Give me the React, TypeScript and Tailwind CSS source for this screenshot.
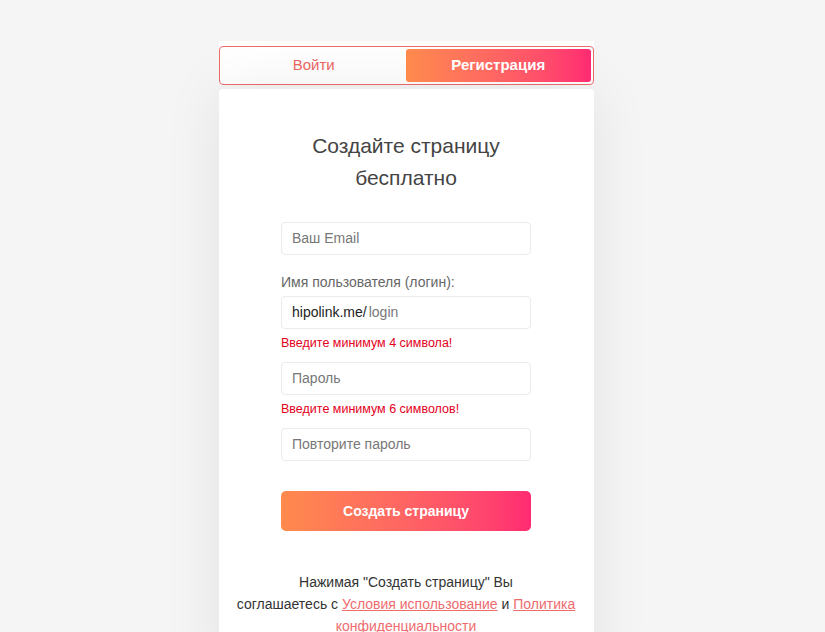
import { useState } from "react";

const font = { fontFamily: '"Liberation Sans", Arial, sans-serif' };

function Field({ placeholder, prefix }: { placeholder: string; prefix?: string }) {
  return (
    <div className="flex h-[33px] w-[250px] items-center rounded-[4px] border border-[#ebebeb] bg-white px-[10px] text-[14px]">
      {prefix && <span className="mr-[2px] text-[#222]">{prefix}</span>}
      <input
        className="w-full bg-transparent text-[#333] placeholder-[#777] outline-none"
        placeholder={placeholder}
      />
    </div>
  );
}

export default function App() {
  const [tab, setTab] = useState<"login" | "signup">("signup");

  return (
    <main className="flex min-h-[632px] justify-center bg-[#f5f5f5] pt-[41px] pr-[13px]" style={font}>
      <div className="w-[375px]">
        <div className="bg-white pt-[5px]">
          <div className="flex h-[39px] rounded-[4px] border border-[#ee6b6e] p-[2px]">
            <button
              onClick={() => setTab("login")}
              className={
                tab === "login"
                  ? "flex-1 rounded-[3px] bg-gradient-to-r from-[#ff8a4c] to-[#ff2a72] text-[15px] font-bold text-white"
                  : "flex-1 text-[15px] text-[#e8655f]"
              }
            >
              Войти
            </button>
            <button
              onClick={() => setTab("signup")}
              className={
                tab === "signup"
                  ? "flex-1 rounded-[3px] bg-gradient-to-r from-[#ff8a4c] to-[#ff2a72] text-[15px] font-bold text-white"
                  : "flex-1 text-[15px] text-[#e8655f]"
              }
            >
              Регистрация
            </button>
          </div>
        </div>

        <section className="mt-[4px] rounded-t-[4px] bg-white pb-10 shadow-[0_0_60px_rgba(0,0,0,0.08)]">
          <h1 className="px-10 pt-[41px] text-center text-[21px] leading-[32px] text-[#444]">
            Создайте страницу
            <br />
            бесплатно
          </h1>

          <form className="mx-auto mt-[28px] flex w-[250px] flex-col" onSubmit={(e) => e.preventDefault()}>
            <Field placeholder="Ваш Email" />
            <label className="mt-[17px] mb-[4px] text-[14px] leading-[20px] text-[#666]">
              Имя пользователя (логин):
            </label>
            <Field prefix="hipolink.me/" placeholder="login" />
            <p className="mt-[6px] mb-[10px] text-[12.5px] leading-[17px] text-[#e3001b]">
              Введите минимум 4 символа!
            </p>
            <Field placeholder="Пароль" />
            <p className="mt-[6px] mb-[10px] text-[12.5px] leading-[17px] text-[#e3001b]">
              Введите минимум 6 символов!
            </p>
            <Field placeholder="Повторите пароль" />
            <button className="mt-[30px] h-[40px] w-full rounded-[5px] bg-gradient-to-r from-[#ff8a4c] to-[#ff2a72] text-[14px] font-bold text-white">
              Создать страницу
            </button>
          </form>

          <p className="mx-auto mt-[40px] w-[360px] text-center text-[14px] leading-[22px] text-[#333]">
            Нажимая "Создать страницу" Вы
            <br />
            соглашаетесь с{" "}
            <a href="#" className="text-[#ee6b6e] underline">
              Условия использование
            </a>{" "}
            и{" "}
            <a href="#" className="text-[#ee6b6e] underline">
              Политика
              <br />
              конфиденциальности
            </a>
          </p>
        </section>
      </div>
    </main>
  );
}
